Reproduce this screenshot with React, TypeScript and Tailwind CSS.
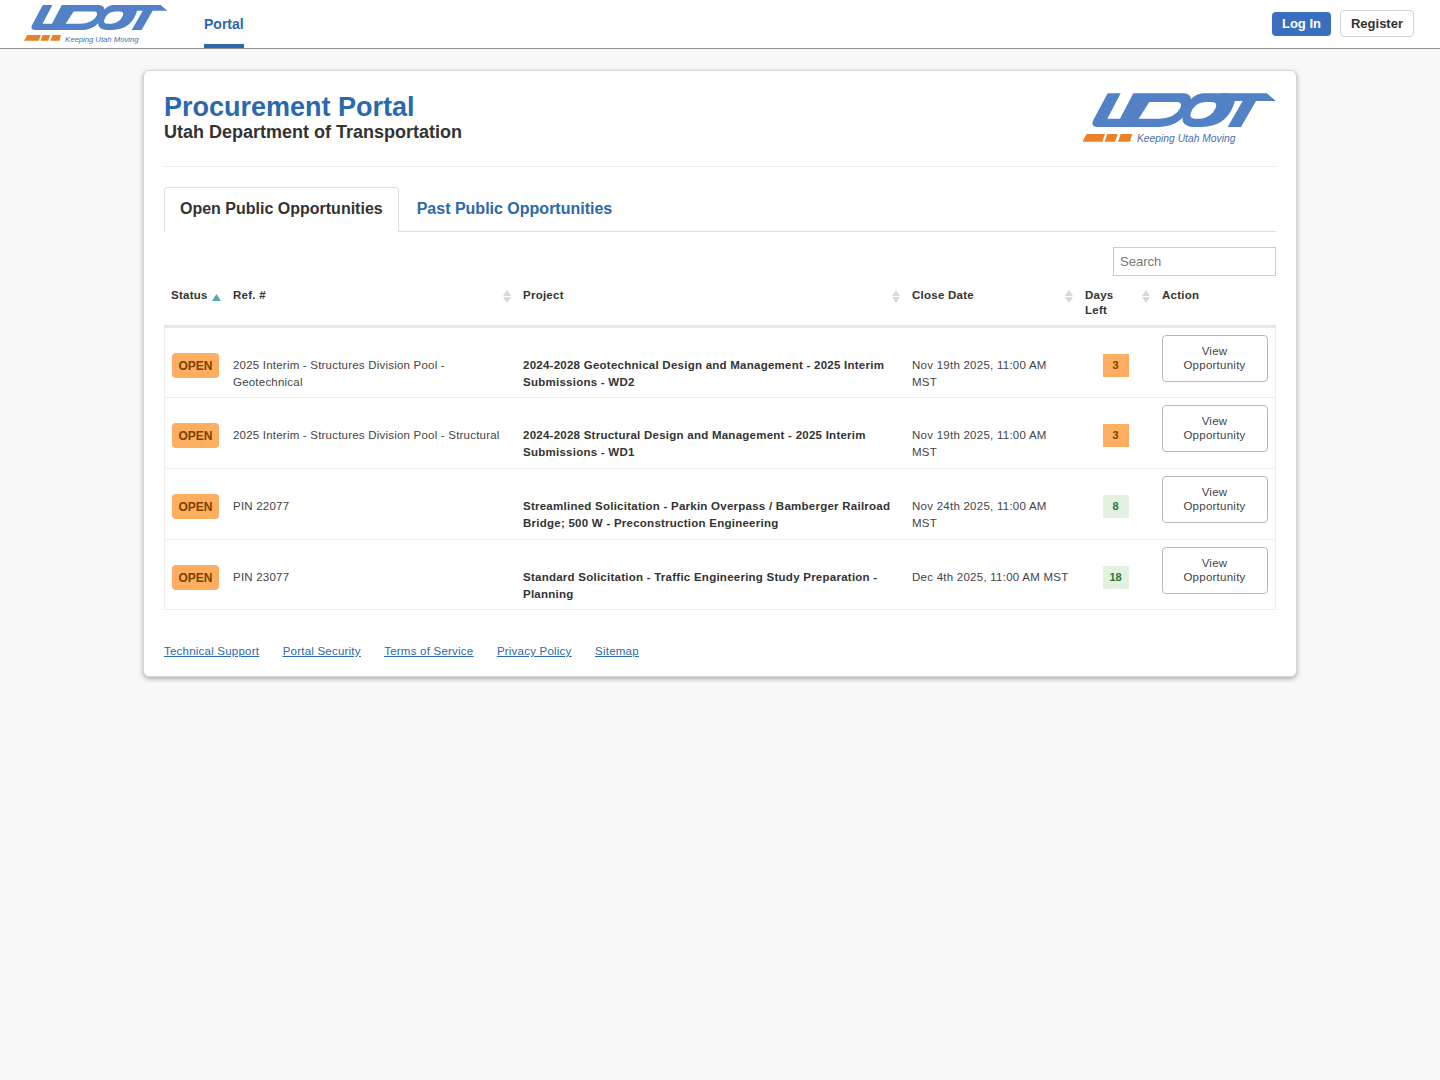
const rows = [
  { ref: "2025 Interim - Structures Division Pool - Geotechnical", project: "2024-2028 Geotechnical Design and Management - 2025 Interim Submissions - WD2", close: "Nov 19th 2025, 11:00 AM MST", days: "3", warn: true, h: "h-[71px]" },
  { ref: "2025 Interim - Structures Division Pool - Structural", project: "2024-2028 Structural Design and Management - 2025 Interim Submissions - WD1", close: "Nov 19th 2025, 11:00 AM MST", days: "3", warn: true, h: "h-[71px]" },
  { ref: "PIN 22077", project: "Streamlined Solicitation - Parkin Overpass / Bamberger Railroad Bridge; 500 W - Preconstruction Engineering", close: "Nov 24th 2025, 11:00 AM MST", days: "8", warn: false, h: "h-[71px]" },
  { ref: "PIN 23077", project: "Standard Solicitation - Traffic Engineering Study Preparation - Planning", close: "Dec 4th 2025, 11:00 AM MST", days: "18", warn: false, h: "h-[70px]" },
];

function Logo({ className, tag }: { className: string; tag: string }) {
  return (
    <div className={`relative shrink-0 ${className}`}>
      <svg viewBox="39 36 579 162" className="block h-full w-full blur-[0.4px]">
        <g fill="#5381c6" fillRule="evenodd">
          <path d="M113 40 H152 L112 116 H150 L190 40 H340 Q372 42 360 76 Q338 138 270 141 H82 Q60 141 70 120 Z M238 66 H322 Q338 67 331 84 Q316 114 268 116 H206 Z" />
          <path d="M400 40 H470 Q505 42 490 78 Q465 140 395 141 H372 Q325 138 342 98 Q360 42 400 40 Z M405 66 Q372 68 362 100 Q358 116 375 116 H390 Q425 114 438 82 Q442 66 425 66 Z" />
          <path d="M455 40 H590 L618 63 H558 L513 141 H473 L518 63 H445 Z" />
        </g>
        <path fill="#e8812a" d="M50 162 H105 L97 185 H37 Z M112 162 H143 L135 185 H104 Z M152 162 H187 L180 185 H144 Z" />
      </svg>
      <span className={`absolute italic whitespace-nowrap text-[#4a6fa8] font-['Liberation_Sans',sans-serif] ${tag}`}>Keeping Utah Moving</span>
    </div>
  );
}

function SortIcon() {
  return (
    <svg width="8" height="13" viewBox="0 0 8 13" className="shrink-0">
      <path d="M4 0 L8 6 H0 Z M0 7 H8 L4 13 Z" fill="#d5d8dc" />
    </svg>
  );
}

export default function App() {
  return (
    <div className="min-h-[1080px] bg-[#f8f8f8] font-['Liberation_Sans',sans-serif] text-[#333]">
      <header className="flex h-[49px] items-stretch justify-between border-b border-[#8f9396] bg-white pr-[26px]">
        <div className="flex items-stretch">
          <Logo className="ml-[24px] mt-[4px] h-[40px] w-[144px]" tag="left-[41px] top-[29.5px] text-[7.7px]" />
          <a className="ml-[36px] flex h-[48px] items-center border-b-[4px] border-[#2a69ac] pt-[4px] text-[14px] font-bold text-[#2a69ac]">Portal</a>
        </div>
        <div className="flex items-center gap-[9px]">
          <button className="h-[24px] rounded-[4px] bg-[#3a6fc0] px-[10px] text-[13px] font-bold text-white">Log In</button>
          <button className="-mt-px h-[27px] rounded-[4px] border border-[#cfd2d6] bg-white px-[10px] text-[13px] font-bold text-[#333]">Register</button>
        </div>
      </header>

      <main className="px-[143px] pt-[21px]">
        <div className="h-[607px] rounded-[6px] border border-[#d3d5d8] bg-white px-[20px] shadow-[0_2px_5px_rgba(0,0,0,0.3)]">
          <div className="flex h-[96px] justify-between border-b border-[#eeeeee]">
            <div className="pt-[19px]">
              <h1 className="text-[27px] leading-[34px] font-bold text-[#2a69ac]">Procurement Portal</h1>
              <h2 className="-mt-[1px] text-[18px] leading-[19px] font-bold text-[#333]">Utah Department of Transportation</h2>
            </div>
            <Logo className="mt-[21px] h-[54px] w-[193px]" tag="left-[54px] top-[38.5px] text-[10.3px]" />
          </div>

          <div className="mt-[20px] flex h-[45px] border-b border-[#dddddd]">
            <div className="-mb-px flex h-[45px] items-center rounded-t-[4px] border border-b-0 border-[#dddddd] bg-white px-[15px] pb-[2px] text-[16px] font-bold text-[#333]">Open Public Opportunities</div>
            <div className="flex items-center px-[18px] pb-[1px] text-[16px] font-bold text-[#2a69ac]">Past Public Opportunities</div>
          </div>

          <div className="mt-[15px] flex justify-end">
            <input placeholder="Search" className="h-[29px] w-[163px] border border-[#ccc] px-[6px] text-[13px] placeholder:text-[#777] outline-none" />
          </div>

          <table className="w-[1111px] table-fixed border-collapse text-[11.5px] tracking-[0.25px]">
            <colgroup>
              <col className="w-[62px]" /><col className="w-[290px]" /><col className="w-[389px]" /><col className="w-[173px]" /><col className="w-[77px]" /><col className="w-[120px]" />
            </colgroup>
            <thead>
              <tr className="h-[49px] border-b-[3px] border-[#e6e7e8] align-top font-bold">
                {[
                  ["Status", ""],["Ref. #", "s"],["Project", "s"],["Close Date", "s"],["Days Left", "s"],["Action", ""],
                ].map(([t, s], i) => (
                  <th key={t} className="pt-[12px] pb-[7px] pl-[6.5px] text-left font-bold leading-[15px]">
                    <div className={`flex items-start ${s ? "justify-between" : ""}`}>
                      <span className={i === 4 ? "w-[34px]" : ""}>{t}</span>
                      {s && <span className="mt-[2px] mr-[6px]"><SortIcon /></span>}
                      {i === 0 && <svg width="9" height="7" viewBox="0 0 9 7" className="mt-[6px] ml-[4px]"><path d="M4.5 0 L9 7 H0 Z" fill="#57a6bb" /></svg>}
                    </div>
                  </th>
                ))}
              </tr>
            </thead>
            <tbody className="border-x border-b border-[#eeeeee]">
              {rows.map((r) => (
                <tr key={r.project} className={`${r.h} border-b border-[#eeeeee] align-top text-[#444] last:border-b-0`}>
                  <td className="pl-[7px] pt-[25px]">
                    <span className="flex h-[25px] w-[47px] items-center justify-center rounded-[4px] bg-[#ffad60] text-[12px] tracking-normal font-bold text-[#7a4100]">OPEN</span>
                  </td>
                  <td className="pl-[6.5px] pr-[7px] pt-[29px] leading-[17px] tracking-[0.21px]">{r.ref}</td>
                  <td className="pl-[6.5px] pr-[7px] pt-[29px] font-bold leading-[17px] text-[#333]">{r.project}</td>
                  <td className="pl-[6.5px] pr-[6px] pt-[29px] leading-[17px]">{r.close}</td>
                  <td className="pl-[24px] pt-[26px]">
                    <span className={`flex h-[23px] w-[26px] items-center justify-center text-[11px] tracking-normal font-bold ${r.warn ? "bg-[#ffad60] text-[#7a4100]" : "bg-[#e3f1e3] text-[#1e7a35]"}`}>{r.days}</span>
                  </td>
                  <td className="pl-[6px] pt-[7px]">
                    <button className="h-[47px] w-[106px] rounded-[4px] border border-[#b5b8bb] bg-white px-[20px] pb-[2px] text-center text-[11.5px] tracking-[0.25px] leading-[14px] text-[#444]">View Opportunity</button>
                  </td>
                </tr>
              ))}
            </tbody>
          </table>

          <footer className="mt-[33px] flex gap-[23.5px] text-[11.5px] tracking-[0.22px] leading-[16px] text-[#2a69ac] underline">
            <a>Technical Support</a><a>Portal Security</a><a>Terms of Service</a><a>Privacy Policy</a><a>Sitemap</a>
          </footer>
        </div>
      </main>
    </div>
  );
}
